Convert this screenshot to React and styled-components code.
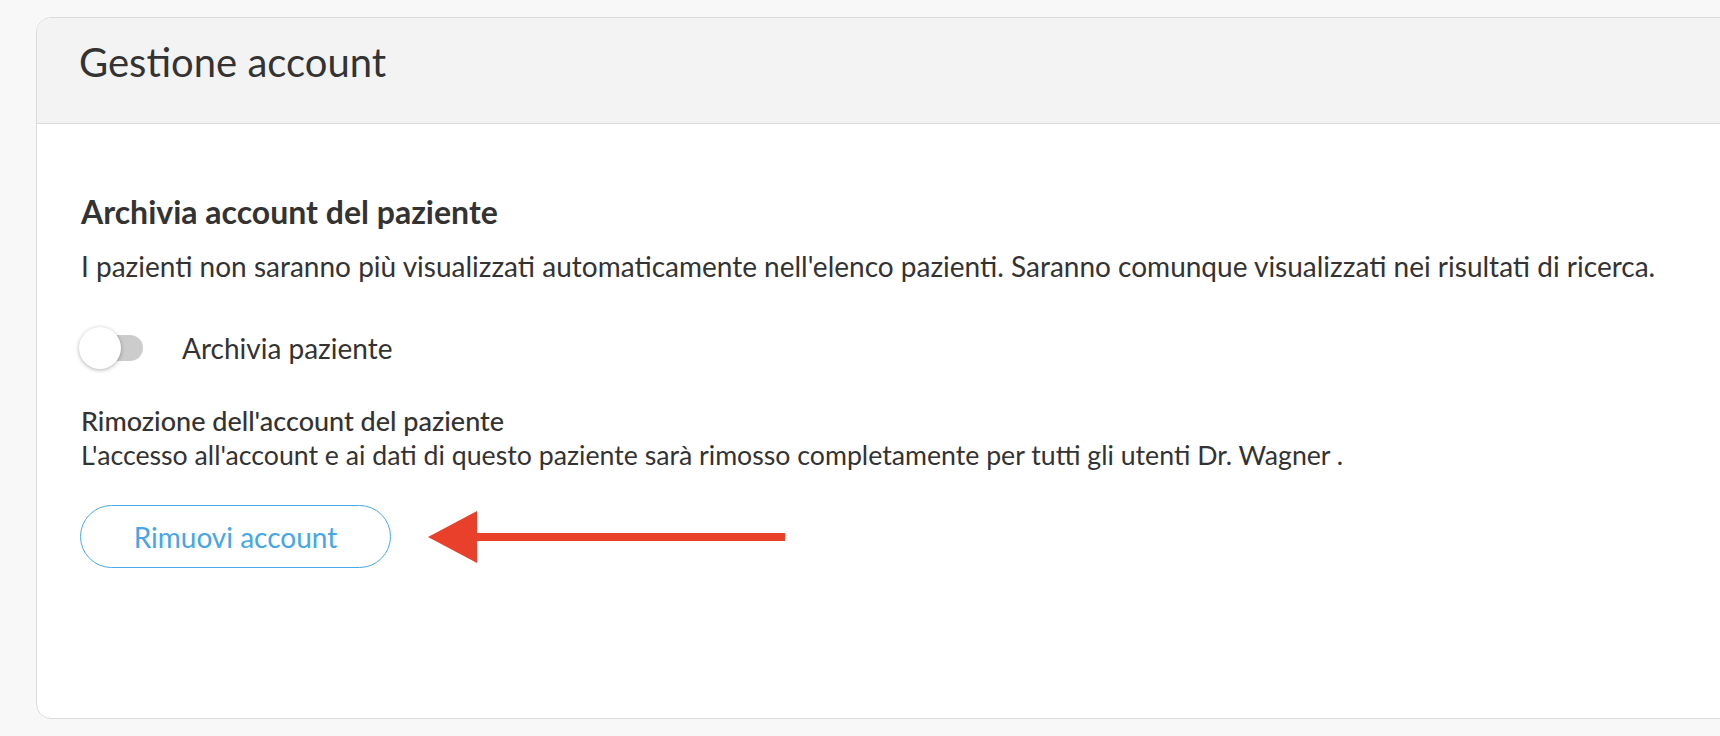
import React from "react";
import styled, { createGlobalStyle } from "styled-components";

const Global = createGlobalStyle`
  html, body { margin: 0; padding: 0; background: #f8f8f8; }
  body { font-family: Lato, "Open Sans", sans-serif; color: #333; }
`;

const Page = styled.div`
  width: 1720px;
  height: 736px;
  overflow: hidden;
  padding: 17px 0 0 36px;
  box-sizing: border-box;
`;

const Card = styled.section`
  width: 1720px;
  height: 702px;
  background: #fff;
  border: 1px solid #dcdcdc;
  border-radius: 15px;
  overflow: hidden;
  box-sizing: border-box;
`;

const CardHeader = styled.header`
  height: 106px;
  background: #f3f3f3;
  border-bottom: 1px solid #dcdcdc;
  display: flex;
  align-items: center;
  padding-left: 42px;
  box-sizing: border-box;
`;

const Title = styled.h1`
  margin: 0;
  font-size: 40px;
  font-weight: 400;
  color: #333;
  padding-bottom: 18px;
`;

const Body = styled.div`
  padding: 68px 0 0 44px;
  display: flex;
  flex-direction: column;
  align-items: flex-start;
`;

const SectionTitle = styled.h2`
  margin: 0;
  font-size: 32px;
  font-weight: 700;
  line-height: 40px;
`;

const Paragraph = styled.p`
  margin: 16px 0 0;
  font-size: 28px;
  line-height: 36px;
`;

const ToggleRow = styled.label`
  display: flex;
  align-items: center;
  gap: 39px;
  margin: 43px 0 0 -2px;
  font-size: 28px;
  line-height: 36px;
`;

const Toggle = styled.span`
  position: relative;
  width: 64px;
  height: 42px;
  display: inline-block;
`;

const Track = styled.span`
  position: absolute;
  left: 4px;
  top: 8px;
  width: 60px;
  height: 26px;
  border-radius: 13px;
  background: #cccccc;
`;

const Knob = styled.span`
  position: absolute;
  left: 0;
  top: 0;
  width: 42px;
  height: 42px;
  border-radius: 50%;
  background: #fff;
  box-shadow: 0 1px 4px rgba(0, 0, 0, 0.3);
`;

const SubTitle = styled.h3`
  margin: 34px 0 0;
  font-size: 27px;
  font-weight: 500;
  line-height: 35px;
`;

const SubText = styled.p`
  margin: 0;
  font-size: 26.7px;
  line-height: 35px;
`;

const ActionRow = styled.div`
  display: flex;
  align-items: center;
  gap: 37px;
  margin: 32px 0 0 -1px;
`;

const OutlineButton = styled.button`
  width: 311px;
  height: 63px;
  border: 1.5px solid #4aa8e8;
  border-radius: 32px;
  background: #fff;
  color: #46a6e7;
  font-family: Lato, sans-serif;
  font-size: 28px;
  cursor: pointer;
`;

const Arrow = () => (
  <svg width="357" height="54" viewBox="0 0 357 54">
    <polygon points="0,27 49,1 49,53" fill="#e8402a" />
    <rect x="45" y="23" width="312" height="8" fill="#e8402a" />
  </svg>
);

export default function App() {
  return (
    <>
      <Global />
      <Page>
        <Card>
          <CardHeader>
            <Title>Gestione account</Title>
          </CardHeader>
          <Body>
            <SectionTitle>Archivia account del paziente</SectionTitle>
            <Paragraph>
              I pazienti non saranno più visualizzati automaticamente nell'elenco pazienti. Saranno comunque visualizzati nei risultati di ricerca.
            </Paragraph>
            <ToggleRow>
              <Toggle>
                <Track />
                <Knob />
              </Toggle>
              Archivia paziente
            </ToggleRow>
            <SubTitle>Rimozione dell'account del paziente</SubTitle>
            <SubText>
              L'accesso all'account e ai dati di questo paziente sarà rimosso completamente per tutti gli utenti Dr. Wagner .
            </SubText>
            <ActionRow>
              <OutlineButton>Rimuovi account</OutlineButton>
              <Arrow />
            </ActionRow>
          </Body>
        </Card>
      </Page>
    </>
  );
}
